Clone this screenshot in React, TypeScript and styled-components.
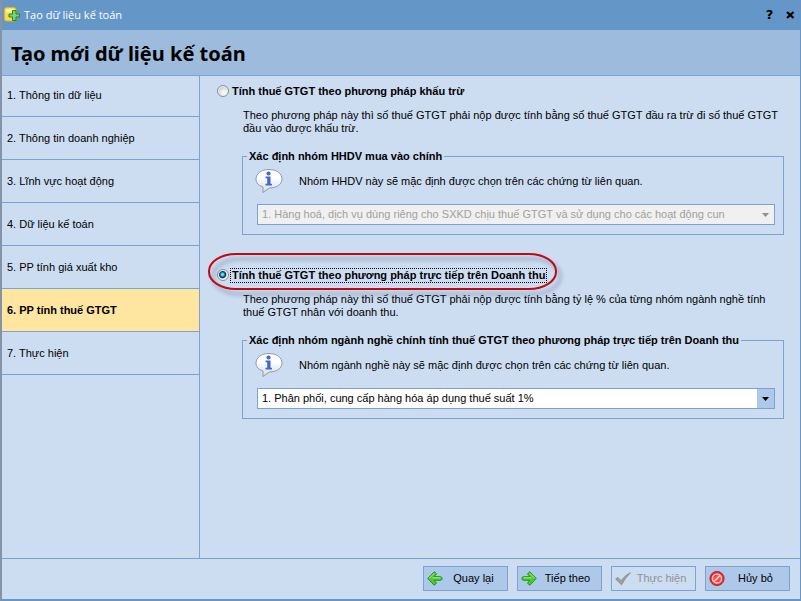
import React from "react";
import styled, { createGlobalStyle, css } from "styled-components";

const line = "#7ba2d0";
const accent = "#6596c8";
const panel = "#ccdcf1";
const control = "#adc8e8";

const GlobalStyle = createGlobalStyle`
  *, *::before, *::after { box-sizing: border-box; }
  body {
    margin: 0;
    background: ${panel};
    color: #000;
    font: 11px/13px "Liberation Sans", Arial, sans-serif;
  }
  button, select, input { font: inherit; color: inherit; }
`;

const Window = styled.div`
  min-height: 100vh;
  display: grid;
  grid-template-rows: auto auto 1fr auto;
  background: ${panel};
  border: solid ${accent};
  border-width: 0 1px 2px 2px;
  border-left-color: #8593a6;
`;

const TitleBar = styled.div`
  height: 30px;
  display: flex;
  align-items: center;
  gap: 4px;
  padding: 0 1px 0 2px;
  background: ${accent};
  color: #fff;
`;

const Caption = styled.span`
  flex: 1;
  font: 11px/16px "Open Sans", "Noto Sans", sans-serif;
`;

const CaptionButton = styled.button`
  width: 17px;
  height: 16px;
  display: grid;
  place-items: center;
  padding: 0;
  border: 0;
  background: none;
  color: #000;
  font: bold 13px/16px "DejaVu Sans", sans-serif;
  svg { display: block; }
`;

const Header = styled.header`
  height: 46px;
  display: flex;
  align-items: center;
  padding: 2px 9px 0;
  background: #9dbbdc;
  border-bottom: 1px solid ${line};
`;

const Heading = styled.h1`
  margin: 0;
  font: bold 20px/28px "Noto Sans", "Open Sans", sans-serif;
`;

const Body = styled.div`
  display: grid;
  grid-template-columns: 198px 1fr;
`;

const Steps = styled.ol`
  margin: 0;
  padding: 0;
  list-style: none;
  border-right: 1px solid ${line};
`;

const Step = styled.li<{ $active?: boolean }>`
  height: 43px;
  display: flex;
  align-items: center;
  padding: 0 5px;
  border-bottom: 1px solid ${line};
  ${(p) => p.$active && css`background: #ffe6a0; font-weight: bold;`}
  &:first-child { height: 41px; padding-bottom: 2px; }
`;

const Main = styled.main`
  display: flex;
  flex-direction: column;
  gap: 33px;
  padding: 8px 16px 0;
`;

const Method = styled.section`
  display: flex;
  flex-direction: column;
`;

const MethodLabel = styled.label`
  position: relative;
  align-self: flex-start;
  height: 14px;
  display: flex;
  align-items: center;
  gap: 2px;
  font-weight: bold;
`;

const MethodName = styled.span<{ $focused?: boolean }>`
  padding: 0 1px;
  outline: ${(p) => (p.$focused ? "1px dotted #000" : "none")};
`;

const Radio = styled.input`
  appearance: none;
  width: 12px;
  height: 12px;
  margin: 0 0 0 1px;
  border: 1px solid #8a8f94;
  border-radius: 50%;
  background: radial-gradient(circle at 60% 65%, #f4f4f4 0 20%, #cfd1d4 60%);
  box-shadow: inset 0 0 0 1px #f4f4f4;
  &:checked {
    border-color: #8a8f94;
    background: radial-gradient(circle at 45% 45%, #9be4fb 0 8%, #1b86bc 26%, #0c304e 42%, #f0f2f4 56%);
  }
`;

const Highlight = styled.span`
  position: absolute;
  inset: -15px -11px -8px -8px;
  border: 2px solid #c00a12;
  border-radius: 28px / 18px;
  filter: drop-shadow(4px 5px 2px rgba(60, 75, 105, 0.45));
  pointer-events: none;
`;

const Description = styled.p`
  margin: 11px 0 0 27px;
`;

const Group = styled.fieldset`
  min-width: 0;
  margin: 15px 0 0 26px;
  padding: 4px 8px 9px 14px;
  border: 1px solid ${line};
`;

const GroupTitle = styled.legend`
  margin-left: -10px;
  padding: 0 2px;
  font-weight: bold;
`;

const Note = styled.div`
  height: 28px;
  display: flex;
  align-items: center;
  gap: 16px;
  svg { margin-left: -2px; }
`;

const SelectBox = styled.div`
  position: relative;
  margin-top: 9px;
`;

const Select = styled.select`
  appearance: none;
  display: block;
  width: 100%;
  height: 21px;
  padding: 0 20px 0 4px;
  border: 1px solid ${line};
  border-radius: 0;
  background: #fff;
  &:disabled { background: #f0f0f0; color: #a0a0a0; opacity: 1; }
`;

const SelectArrow = styled.span<{ $disabled?: boolean }>`
  position: absolute;
  inset: 1px 1px 1px auto;
  width: 17px;
  display: grid;
  place-items: center;
  background: ${(p) => (p.$disabled ? "none" : control)};
  color: ${(p) => (p.$disabled ? "#909090" : "#000")};
  pointer-events: none;
`;

const Footer = styled.footer`
  display: flex;
  justify-content: flex-end;
  gap: 9px;
  padding: 7px 10px 8px;
  border-top: 1px solid ${line};
`;

const Action = styled.button`
  width: 85px;
  height: 25px;
  display: flex;
  align-items: center;
  padding: 0 3px;
  border: 1px solid ${line};
  background: ${control};
  span { flex: 1; text-align: center; }
  &:disabled { background: ${panel}; color: #8f9299; }
`;

const DatabaseAddIcon = () => (
  <svg width="16" height="16" viewBox="0 0 16 16" aria-hidden="true">
    <path d="M.5 2.500Q.5 .5 3 .5h6.500Q12 .5 12 2.500v9.500Q12 14 9.500 14H3Q.5 14 .5 12z" fill="#fbdc58" stroke="#e9b50d" />
    <path d="M2 2h8.500v3.500H2z" fill="#fff1a8" />
    <path d="M8.500 3.500h3.500v3.500h3.500v3h-3.500v3.500H8.500V10H5V7h3.500z" fill="#7fd070" stroke="#1c8a2a" />
  </svg>
);

const CloseIcon = () => (
  <svg width="9" height="9" viewBox="0 0 9 9" aria-hidden="true">
    <path d="M1 1l6.500 6M7.500 1L1 7" stroke="#000" strokeWidth="2.200" />
  </svg>
);

const InfoBubble = () => (
  <svg width="28" height="26" viewBox="0 0 28 26" aria-hidden="true">
    <defs>
      <linearGradient id="bubble" x2="0" y2="1">
        <stop offset=".35" stopColor="#fff" />
        <stop offset="1" stopColor="#d3dae4" />
      </linearGradient>
    </defs>
    <path
      d="M14 1.500C21.500 1.500 27 5.500 27 11s-5.500 9-12.500 9Q12 21.500 8 24.500V19C3.500 17.500 1 15 1 11 1 5.500 6.500 1.500 14 1.500z"
      fill="url(#bubble)"
      stroke="#8f9cae"
    />
    <circle cx="13.500" cy="5.500" r="2.100" fill="#4468c4" />
    <path d="M10.500 8.500h5v7.300h1.500v1.700h-6.500v-1.700h1.700v-5.600h-1.700z" fill="#4468c4" />
  </svg>
);

const DownIcon = () => (
  <svg width="7" height="4" viewBox="0 0 7 4" aria-hidden="true">
    <path d="M0 0h7L3.500 4z" fill="currentColor" />
  </svg>
);

const ArrowIcon = ({ back = false }: { back?: boolean }) => (
  <svg width="16" height="16" viewBox="0 0 16 16" aria-hidden="true">
    <g transform={back ? undefined : "matrix(-1 0 0 1 16 0)"}>
      <path
        d="M.8 7.500L7.200 .8 9.500 2.800 7 5.700H13Q15.200 5.700 15.200 7.500T13 9.300H7l2.500 2.900L7.200 14.200z"
        fill="#4ecb34"
        stroke="#209018"
        strokeLinejoin="round"
      />
      <path d="M2.500 7.100l4.800-4.900M5.500 6.800H13.500" stroke="#a7ef8b" fill="none" />
    </g>
  </svg>
);

const CheckIcon = () => (
  <svg width="16" height="16" viewBox="0 0 16 16" aria-hidden="true">
    <path d="M.7 8L3 6.500l3 3.500Q9.500 4.500 15.300 1.800 10.500 6.500 6.500 13.700z" fill="#a2a4a4" stroke="#7e8181" strokeWidth=".8" />
  </svg>
);

const StopIcon = () => (
  <svg width="16" height="16" viewBox="0 0 16 16" aria-hidden="true">
    <circle cx="8" cy="7.500" r="7.100" fill="#e8282c" stroke="#b9151b" strokeWidth=".8" />
    <circle cx="8" cy="7.500" r="4.600" fill="#f04a4a" stroke="#ffc4c4" strokeWidth="1.500" />
    <path d="M4.900 10.600l6.200-6.200" stroke="#ffc4c4" strokeWidth="1.700" />
  </svg>
);

const steps = [
  "Thông tin dữ liệu",
  "Thông tin doanh nghiệp",
  "Lĩnh vực hoạt động",
  "Dữ liệu kế toán",
  "PP tính giá xuất kho",
  "PP tính thuế GTGT",
  "Thực hiện",
];
const currentStep = 5;

const methods = [
  {
    id: "deduction",
    name: "Tính thuế GTGT theo phương pháp khấu trừ",
    description:
      "Theo phương pháp này thì số thuế GTGT phải nộp được tính bằng số thuế GTGT đầu ra trừ đi số thuế GTGT đầu vào được khấu trừ.",
    group: "Xác định nhóm HHDV mua vào chính",
    note: "Nhóm HHDV này sẽ mặc định được chọn trên các chứng từ liên quan.",
    option: "1. Hàng hoá, dịch vụ dùng riêng cho SXKD chịu thuế GTGT và sử dụng cho các hoạt động cun",
  },
  {
    id: "direct",
    name: "Tính thuế GTGT theo phương pháp trực tiếp trên Doanh thu",
    description:
      "Theo phương pháp này thì số thuế GTGT phải nộp được tính bằng tỷ lệ % của từng nhóm ngành nghề tính thuế GTGT nhân với doanh thu.",
    group: "Xác định nhóm ngành nghề chính tính thuế GTGT theo phương pháp trực tiếp trên Doanh thu",
    note: "Nhóm ngành nghề này sẽ mặc định được chọn trên các chứng từ liên quan.",
    option: "1. Phân phối, cung cấp hàng hóa áp dụng thuế suất 1%",
  },
];

export default function App() {
  const [selected, setSelected] = React.useState("direct");

  return (
    <>
      <GlobalStyle />
      <Window>
        <TitleBar>
          <DatabaseAddIcon />
          <Caption>Tạo dữ liệu kế toán</Caption>
          <CaptionButton type="button" aria-label="Trợ giúp">?</CaptionButton>
          <CaptionButton type="button" aria-label="Đóng"><CloseIcon /></CaptionButton>
        </TitleBar>
        <Header>
          <Heading>Tạo mới dữ liệu kế toán</Heading>
        </Header>
        <Body>
          <Steps>
            {steps.map((step, i) => (
              <Step key={step} $active={i === currentStep}>{`${i + 1}. ${step}`}</Step>
            ))}
          </Steps>
          <Main>
            {methods.map((m) => {
              const active = selected === m.id;
              return (
                <Method key={m.id}>
                  <MethodLabel>
                    <Radio type="radio" name="method" checked={active} onChange={() => setSelected(m.id)} />
                    <MethodName $focused={active}>{m.name}</MethodName>
                    {active && <Highlight />}
                  </MethodLabel>
                  <Description>{m.description}</Description>
                  <Group>
                    <GroupTitle>{m.group}</GroupTitle>
                    <Note>
                      <InfoBubble />
                      <span id={`${m.id}-note`}>{m.note}</span>
                    </Note>
                    <SelectBox>
                      <Select aria-labelledby={`${m.id}-note`} disabled={!active}>
                        <option>{m.option}</option>
                      </Select>
                      <SelectArrow $disabled={!active}><DownIcon /></SelectArrow>
                    </SelectBox>
                  </Group>
                </Method>
              );
            })}
          </Main>
        </Body>
        <Footer>
          <Action type="button"><ArrowIcon back /><span>Quay lại</span></Action>
          <Action type="button"><ArrowIcon /><span>Tiếp theo</span></Action>
          <Action type="button" disabled><CheckIcon /><span>Thực hiện</span></Action>
          <Action type="button"><StopIcon /><span>Hủy bỏ</span></Action>
        </Footer>
      </Window>
    </>
  );
}
